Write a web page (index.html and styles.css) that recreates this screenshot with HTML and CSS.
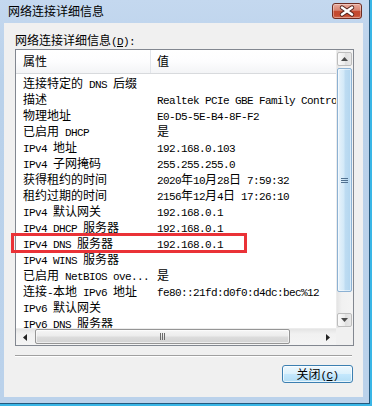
FILE: index.html
```html
<!DOCTYPE html>
<html lang="zh-CN">
<head>
    <meta charset="UTF-8">
    <meta name="viewport" content="width=device-width, initial-scale=1.0">
    <title>网络连接详细信息</title>
    <link rel="stylesheet" href="styles.css">
</head>
<body>
    <div class="window">
        <div class="titlebar">
            <span class="title">网络连接详细信息</span>
            <button class="close-x" aria-label="关闭">
                <svg width="30" height="16" viewBox="0 0 30 16">
                    <path d="M10 4.5 L20 11.5 M20 4.5 L10 11.5" stroke="#4f211a" stroke-width="4.4" stroke-linecap="round"/>
                    <path d="M10 4.5 L20 11.5 M20 4.5 L10 11.5" stroke="#fff" stroke-width="2.6" stroke-linecap="round"/>
                </svg>
            </button>
        </div>

        <div class="client">
            <div class="caption">网络连接详细信息<span class="m">(<u>D</u>):</span></div>

            <div class="listview">
                <div class="lv-main">
                    <div class="lv-head">
                        <div class="col1">属性</div>
                        <div class="col2">值</div>
                    </div>
                    <div class="lv-rows">
                        <div class="row"><div class="col1">连接特定的<span class="m"> DNS </span>后缀</div><div class="col2"></div></div>
                        <div class="row"><div class="col1">描述</div><div class="col2"><span class="m">Realtek PCIe GBE Family Controller</span></div></div>
                        <div class="row"><div class="col1">物理地址</div><div class="col2"><span class="m">E0-D5-5E-B4-8F-F2</span></div></div>
                        <div class="row"><div class="col1">已启用<span class="m"> DHCP</span></div><div class="col2">是</div></div>
                        <div class="row"><div class="col1"><span class="m">IPv4 </span>地址</div><div class="col2"><span class="m">192.168.0.103</span></div></div>
                        <div class="row"><div class="col1"><span class="m">IPv4 </span>子网掩码</div><div class="col2"><span class="m">255.255.255.0</span></div></div>
                        <div class="row"><div class="col1">获得租约的时间</div><div class="col2"><span class="m">2020</span>年<span class="m">10</span>月<span class="m">28</span>日<span class="m"> 7:59:32</span></div></div>
                        <div class="row"><div class="col1">租约过期的时间</div><div class="col2"><span class="m">2156</span>年<span class="m">12</span>月<span class="m">4</span>日<span class="m"> 17:26:10</span></div></div>
                        <div class="row"><div class="col1"><span class="m">IPv4 </span>默认网关</div><div class="col2"><span class="m">192.168.0.1</span></div></div>
                        <div class="row"><div class="col1"><span class="m">IPv4 DHCP </span>服务器</div><div class="col2"><span class="m">192.168.0.1</span></div></div>
                        <div class="row"><div class="col1"><span class="m">IPv4 DNS </span>服务器</div><div class="col2"><span class="m">192.168.0.1</span></div></div>
                        <div class="row"><div class="col1"><span class="m">IPv4 WINS </span>服务器</div><div class="col2"></div></div>
                        <div class="row"><div class="col1">已启用<span class="m"> NetBIOS ove...</span></div><div class="col2">是</div></div>
                        <div class="row"><div class="col1">连接<span class="m">-</span>本地<span class="m"> IPv6 </span>地址</div><div class="col2"><span class="m">fe80::21fd:d0f0:d4dc:bec%12</span></div></div>
                        <div class="row"><div class="col1"><span class="m">IPv6 </span>默认网关</div><div class="col2"></div></div>
                        <div class="row"><div class="col1"><span class="m">IPv6 DNS </span>服务器</div><div class="col2"></div></div>
                    </div>
                </div>

                <div class="vscroll">
                    <div class="sb-btn">
                        <div class="sb-box"><svg width="7" height="4" viewBox="0 0 7 4"><path d="M0 4 L3.5 0 L7 4 Z" fill="#4a4a4a"/></svg></div>
                    </div>
                    <div class="v-thumb">
                        <svg width="7" height="5" viewBox="0 0 7 5"><path d="M0 0.5 H7 M0 2.5 H7 M0 4.5 H7" stroke="#50708f" stroke-width="1"/></svg>
                    </div>
                    <div class="sb-fill"></div>
                    <div class="sb-btn">
                        <div class="sb-box"><svg width="7" height="4" viewBox="0 0 7 4"><path d="M0 0 L3.5 4 L7 0 Z" fill="#4a4a4a"/></svg></div>
                    </div>
                </div>

                <div class="hscroll">
                    <div class="sb-btn"><svg width="4" height="7" viewBox="0 0 4 7"><path d="M4 0 L0 3.5 L4 7 Z" fill="#222"/></svg></div>
                    <div class="h-thumb">
                        <svg width="5" height="7" viewBox="0 0 5 7"><path d="M0.5 0 V7 M2.5 0 V7 M4.5 0 V7" stroke="#6a6a6a" stroke-width="1"/></svg>
                    </div>
                    <div class="sb-fill"></div>
                    <div class="sb-btn"><svg width="4" height="7" viewBox="0 0 4 7"><path d="M0 0 L4 3.5 L0 7 Z" fill="#222"/></svg></div>
                </div>

                <div class="corner"></div>

                <!-- highlight drawn over the DNS row -->
                <div class="mark"></div>
            </div>

            <div class="sep"></div>

            <div class="actions">
                <button class="btn">关闭<span class="m">(<u>C</u>)</span></button>
            </div>
        </div>
    </div>
</body>
</html>
```

FILE: styles.css
```css
* {
    box-sizing: border-box;
}
html, body {
    margin: 0;
}
body {
    width: 372px;
    height: 406px;
    overflow: hidden;
    background-color: #3ab6e6;
    font-family: "Noto Sans CJK SC", sans-serif;
    font-size: 12px;
    color: #000;
}
.m {
    font-family: "Liberation Mono", monospace;
    font-size: 11px;
    letter-spacing: -0.6px;
}
.window {
    width: 370px;
    height: 404px;
    border-right: 1px solid #24597e;
    border-bottom: 1px solid #24597e;
    background: linear-gradient(#c4d8ef, #b9d1ea 80px, #bbd2eb);
    display: flex;
    flex-direction: column;
}
.titlebar {
    height: 23px;
    flex: none;
    display: flex;
    align-items: center;
    padding: 0 7px 0 8px;
}
.title {
    flex: 1;
    line-height: 16px;
    margin-top: -1px;
}
.close-x {
    width: 30px;
    height: 16px;
    padding: 0;
    margin-top: -1px;
    border: 1px solid #6e2c22;
    border-radius: 3px;
    background: linear-gradient(#e9aa9b, #d88573 45%, #c54a30 52%, #c44a30 80%, #d66a4e);
    box-shadow: inset 0 0 0 1px rgba(255, 255, 255, 0.35);
    display: flex;
    align-items: center;
    justify-content: center;
}
.close-x svg {
    display: block;
    margin: -1px;
}
.client {
    flex: 1;
    margin: 0 6px 6px 4px;
    background-color: #f0f0f0;
    padding: 9px 9px 0 11px;
}
.caption {
    height: 16px;
    line-height: 16px;
    white-space: nowrap;
}
.listview {
    position: relative;
    width: 339px;
    height: 297px;
    margin-top: 1px;
    border: 1px solid #828790;
    background-color: #fff;
    display: grid;
    grid-template-columns: 320px 17px;
    grid-template-rows: 278px 17px;
}
.lv-main {
    overflow: hidden;
}
.lv-head {
    height: 24px;
    padding-top: 3px;
    display: flex;
    line-height: 16px;
    background: linear-gradient(#ffffff, #fdfdfe 50%, #f3f4f6);
    border-bottom: 1px solid #d8dadd;
}
.lv-head .col1 {
    border-right: 1px solid #e2e5ea;
    margin-top: -3px;
    padding-top: 3px;
}
.col1 {
    flex: none;
    width: 135px;
    padding-left: 7px;
    overflow: hidden;
    white-space: nowrap;
}
.col2 {
    flex: none;
    padding-left: 6px;
    white-space: nowrap;
}
.lv-rows {
    padding-top: 1px;
}
.row {
    display: flex;
    height: 16px;
    line-height: 16px;
}

/* scrollbars */
.vscroll {
    display: flex;
    flex-direction: column;
    background: linear-gradient(90deg, #e4e4e4, #f1f1f1 30%, #f4f4f4);
    border-left: 1px solid #ececec;
}
.hscroll {
    display: flex;
    background: linear-gradient(#e4e4e4, #f1f1f1 30%, #f4f4f4);
    border-top: 1px solid #ececec;
}
.sb-btn {
    flex: none;
    width: 17px;
    height: 17px;
    display: flex;
    align-items: center;
    justify-content: center;
}
.vscroll .sb-btn {
    width: 100%;
    padding: 2px 1px 1px 0;
}
.sb-box {
    width: 100%;
    height: 100%;
    border: 1px solid #bdbdbd;
    border-radius: 2px;
    background: linear-gradient(90deg, #fbfbfb, #ececec 50%, #dedede 50%, #e8e8e8);
    display: flex;
    align-items: center;
    justify-content: center;
}
.sb-box svg,
.sb-btn svg {
    display: block;
}
.sb-fill {
    flex: 1;
}
.v-thumb {
    flex: none;
    height: 224px;
    margin: 1px 1px 0 0;
    border: 1px solid #8cb1d3;
    border-radius: 2px;
    background: linear-gradient(90deg, #e8f3fb, #d3e9f8 45%, #bedcf2 55%, #b2d5ef);
    box-shadow: inset 0 0 0 1px rgba(255, 255, 255, 0.5);
    display: flex;
    align-items: center;
    justify-content: center;
}
.h-thumb {
    flex: none;
    width: 255px;
    margin: 0 0 1px 2px;
    border: 1px solid #959595;
    border-radius: 2px;
    background: linear-gradient(#f6f6f6, #ececec 45%, #dcdcdc 55%, #d2d2d2);
    box-shadow: inset 0 0 0 1px rgba(255, 255, 255, 0.6);
    display: flex;
    align-items: center;
    justify-content: center;
}
.corner {
    background-color: #f0f0f0;
}
.mark {
    position: absolute;
    left: -5px;
    top: 183px;
    width: 236px;
    height: 20px;
    border: 3px solid #ea3237;
}
.sep {
    width: 337px;
    height: 2px;
    margin-top: 9px;
    border-top: 1px solid #a0a0a0;
    border-bottom: 1px solid #ffffff;
}
.actions {
    display: flex;
    justify-content: flex-end;
    padding-right: 1px;
    margin-top: 8px;
}
.btn {
    width: 71px;
    height: 18px;
    padding: 0;
    border: 1px solid #3c7fb1;
    border-radius: 3px;
    background: linear-gradient(#eef8fe, #dcf1fc 48%, #c4e8fd 52%, #b3ddf5);
    box-shadow: inset 0 0 0 1px rgba(255, 255, 255, 0.7);
    font-family: "Noto Sans CJK SC", sans-serif;
    font-size: 12px;
    line-height: 16px;
    color: #000;
}
```
